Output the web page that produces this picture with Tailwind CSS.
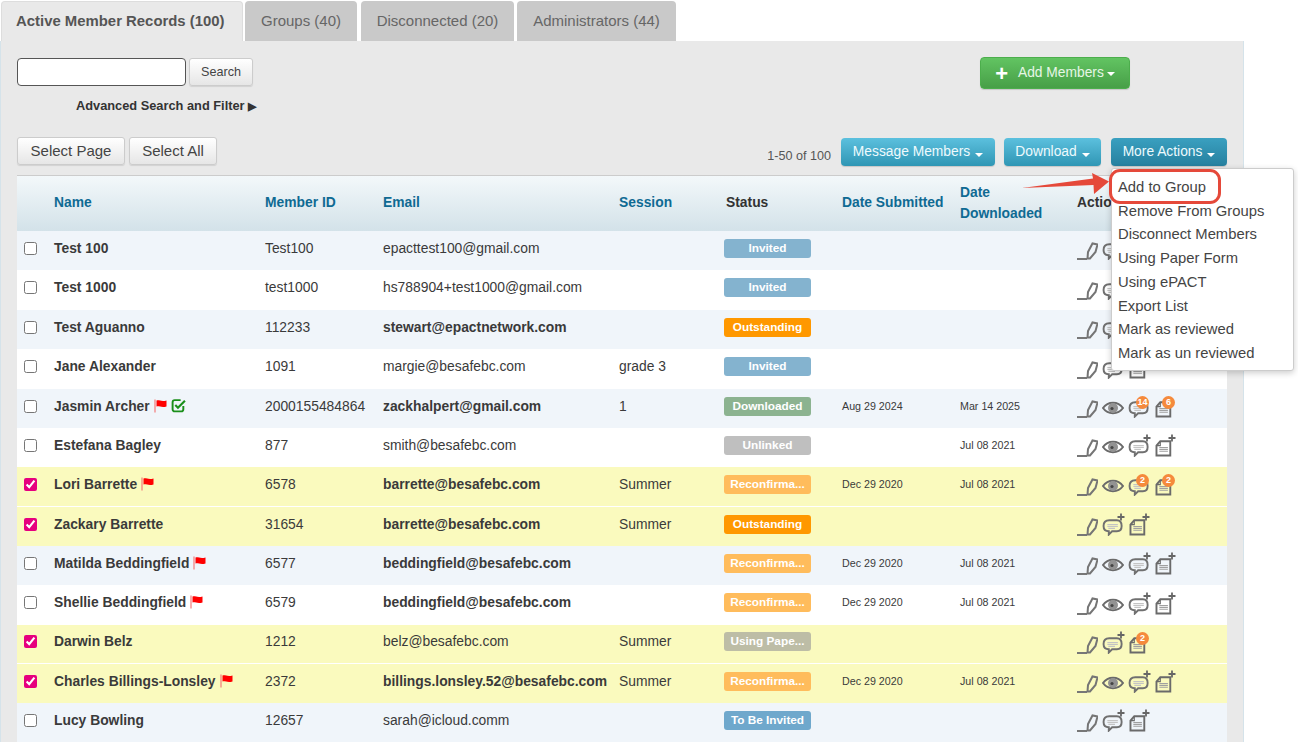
<!DOCTYPE html>
<html lang="en">
<head>
<meta charset="utf-8">
<title>Members</title>
<script src="https://cdn.jsdelivr.net/npm/@tailwindcss/browser@4"></script>
</head>
<body class="bg-white h-[742px] w-[1298px] overflow-hidden font-['Liberation_Sans',Arial,sans-serif] text-[13.850px] text-[#3a3a3a]">
<svg class="hidden" xmlns="http://www.w3.org/2000/svg">
  <symbol id="pen" viewBox="0 0 21 18"><path d="M0 17H10" fill="none" stroke="#777" stroke-width="2"/><path d="M10.500 16.500L11 10L15.500 1.500L20.500 2.500L18.500 10L13 16.500Z" fill="none" stroke="#757575" stroke-width="2"/></symbol>
  <symbol id="eye" viewBox="0 0 22 16"><path d="M1 8C6 1 16 1 21 8C16 15 6 15 1 8Z" fill="none" stroke="#6a6a6a" stroke-width="2"/><circle cx="11" cy="8" r="5" fill="#929292"/><circle cx="10" cy="8.500" r="1.600" fill="#444"/></symbol>
  <symbol id="chat" viewBox="0 0 25 21"><path d="M7 4.500H15C18 4.500 20 6.800 20 10.500C20 14 18 16 15 16H10L6.500 19.500L6.500 16C3 16 1 14 1 10.500C1 6.800 3 4.500 7 4.500Z" fill="none" stroke="#707070" stroke-width="2"/><path d="M5 9H16M5 11H16M6 13H13" stroke="#c4c4c4" stroke-width="1.200"/></symbol>
  <symbol id="doc" viewBox="0 0 22 21"><path d="M5 4.500H15.500V19.500H1V9Z" fill="none" stroke="#6a6a6a" stroke-width="2"/><path d="M5 5V9H1" fill="none" stroke="#6a6a6a" stroke-width="1.200"/><path d="M4 11H13M4 13H13M4 15H13" stroke="#a0a0a0" stroke-width="1.100"/></symbol>
  <symbol id="plus" viewBox="0 0 8 8"><path d="M4 0.500V7.500M0.500 4H7.500" stroke="#666" stroke-width="1.800"/></symbol>
  <symbol id="flag" viewBox="0 0 13 14"><path d="M1 0.500V13.500" stroke="#f47a7a" stroke-width="1.200"/><path d="M2.500 1.500C5 0.500 7 3 12.500 1.500V7.500C7 9 5 6.500 2.500 7.500Z" fill="#f00"/></symbol>
  <symbol id="ok" viewBox="0 0 14 14"><path d="M11.500 7.500V10.500C11.500 11.700 10.700 12.500 9.500 12.500H3.500C2.300 12.500 1.500 11.700 1.500 10.500V4C1.500 2.800 2.300 2 3.500 2H9" fill="none" stroke="#1a8f1a" stroke-width="1.800"/><path d="M4 6.500L6.500 9L13 2.500" fill="none" stroke="#1a8f1a" stroke-width="2"/></symbol>
</svg>

<!-- Tabs -->
<nav class="flex h-[41px] pl-px pt-px text-[15px]">
  <a class="w-[242px] bg-[#e9e9e9] rounded-t-[4px] border border-b-0 border-[#ddd] flex items-center pl-[14px] font-bold text-[14.900px] text-[#555]">Active Member Records (100)</a>
  <a class="w-[112px] ml-[2px] pt-[1px] bg-[#c9c9c9] rounded-t-[4px] flex items-center justify-center text-[#666]">Groups (40)</a>
  <a class="w-[153px] ml-[4px] pt-[1px] bg-[#c9c9c9] rounded-t-[4px] flex items-center justify-center text-[#666]">Disconnected (20)</a>
  <a class="w-[159px] ml-[3px] pt-[1px] bg-[#c9c9c9] rounded-t-[4px] flex items-center justify-center text-[#666]">Administrators (44)</a>
</nav>

<!-- Panel -->
<main class="relative w-[1244px] h-[701px] bg-[#e9e9e9] border-l border-r border-[#d5e3ea] pl-[16px] pr-[16px] pt-[16px]">
  <div class="flex items-start h-[32px]">
    <input type="text" aria-label="Search" class="mt-px w-[169px] h-[28px] bg-white border border-[#555] rounded-[4px]">
    <button class="mt-px ml-[3px] w-[64px] h-[28px] rounded-[3px] border border-[#ccc] bg-gradient-to-b from-white to-[#e6e6e6] text-[12.600px] text-[#444] shadow-[0_1px_1px_rgba(0,0,0,0.1)]">Search</button>
    <button class="ml-auto mr-[97px] w-[150px] h-[32px] pt-px rounded-[4px] border border-[#4cae4c] bg-gradient-to-b from-[#62c462] to-[#479f47] text-[#e6f6e6] text-[13.800px] flex items-center justify-center gap-[10px] shadow-[0_1px_1px_rgba(0,0,0,0.15)]">
      <span class="text-white text-[22px] leading-none font-bold">+</span>
      <span class="flex items-center gap-[3px]">Add Members <i class="w-0 h-0 border-x-[4px] border-x-transparent border-t-[4px] border-t-white"></i></span>
    </button>
  </div>
  <p class="mt-[9px] ml-[59px] h-[16px] leading-[16px] text-[12.800px] font-bold text-[#333]">Advanced Search and Filter <span class="text-[11px]">▶</span></p>
  <div class="mt-[23px] flex items-start h-[38px]">
    <button class="w-[108px] h-[28px] pt-px rounded-[3px] border border-[#ccc] bg-gradient-to-b from-white to-[#e6e6e6] text-[15px] text-[#444] shadow-[0_1px_1px_rgba(0,0,0,0.1)]">Select Page</button>
    <button class="ml-[4px] w-[88px] h-[28px] pt-px rounded-[3px] border border-[#ccc] bg-gradient-to-b from-white to-[#e6e6e6] text-[15px] text-[#444] shadow-[0_1px_1px_rgba(0,0,0,0.1)]">Select All</button>
    <span class="ml-auto mt-[10px] mr-[10px] text-[12.600px] text-[#555]">1-50 of 100</span>
    <button class="mt-px w-[154px] h-[28px] rounded-[4px] bg-gradient-to-b from-[#5bc0de] to-[#2f96b4] text-[#eefafd] text-[13.800px] flex items-center justify-center gap-[5px] shadow-[0_1px_1px_rgba(0,0,0,0.15)]">Message Members <i class="mt-[5px] w-0 h-0 border-x-[4px] border-x-transparent border-t-[4px] border-t-white"></i></button>
    <button class="mt-px ml-[9px] w-[97px] h-[28px] rounded-[4px] bg-gradient-to-b from-[#5bc0de] to-[#2f96b4] text-[#eefafd] text-[13.800px] flex items-center justify-center gap-[5px] shadow-[0_1px_1px_rgba(0,0,0,0.15)]">Download <i class="mt-[5px] w-0 h-0 border-x-[4px] border-x-transparent border-t-[4px] border-t-white"></i></button>
    <button class="mt-px ml-[10px] w-[116px] h-[28px] rounded-[4px] bg-gradient-to-b from-[#3aa0c0] to-[#26809f] text-[#eefafd] text-[13.800px] flex items-center justify-center gap-[5px] shadow-[0_1px_1px_rgba(0,0,0,0.15)]">More Actions <i class="mt-[5px] w-0 h-0 border-x-[4px] border-x-transparent border-t-[4px] border-t-white"></i></button>
  </div>

  <table class="w-[1210px] table-fixed border-collapse border-t border-[#ccc]">
    <colgroup><col class="w-[29px]"><col class="w-[211px]"><col class="w-[118px]"><col class="w-[236px]"><col class="w-[106px]"><col class="w-[117px]"><col class="w-[118px]"><col class="w-[117px]"><col class="w-[158px]"></colgroup>
    <thead>
      <tr class="h-[55px] bg-gradient-to-b from-[#f3f8fa] to-[#d3e2e9] text-left font-bold text-[#0f6a93]">
        <th></th>
        <th class="pl-[8px] pb-[2px]">Name</th>
        <th class="pl-[8px] pb-[2px]">Member ID</th>
        <th class="pl-[8px] pb-[2px]">Email</th>
        <th class="pl-[8px] pb-[2px]">Session</th>
        <th class="pl-[9px] pb-[2px] text-[#333]">Status</th>
        <th class="pl-[8px] pb-[2px]">Date Submitted</th>
        <th class="pl-[8px] pb-px leading-[21px] font-bold">Date<br>Downloaded</th>
        <th class="pl-[8px] pb-[2px] text-[#333]">Actions</th>
      </tr>
    </thead>
    <tbody class="[&_td:not(:last-child)]:pb-[4px]">
      <tr class="h-[39px] bg-[#f0f5fa]">
        <td class="pl-[7px]"><input type="checkbox" aria-label="Select" class="block size-[13px] accent-[#e6007e]"></td>
        <td class="pl-[8px] font-bold">Test 100</td><td class="pl-[8px]">Test100</td><td class="pl-[8px]">epacttest100@gmail.com</td><td class="pl-[8px]"></td>
        <td class="pl-[7px]"><span class="block w-[87px] h-[19px] leading-[19px] rounded-[3px] bg-[#84b3cf] text-white text-[11.800px] font-bold text-center">Invited</span></td>
        <td></td><td></td>
        <td class="pl-[8px]"><div class="flex items-end h-[20px]"><svg class="w-[21px] h-[18px]"><use href="#pen"/></svg><span class="relative ml-[4px] w-[25px] h-[20px]"><svg class="w-[25px] h-[20px]"><use href="#chat"/></svg></span></div></td>
      </tr>
      <tr class="h-[40px] bg-white">
        <td class="pl-[7px]"><input type="checkbox" aria-label="Select" class="block size-[13px] accent-[#e6007e]"></td>
        <td class="pl-[8px] font-bold">Test 1000</td><td class="pl-[8px]">test1000</td><td class="pl-[8px]">hs788904+test1000@gmail.com</td><td class="pl-[8px]"></td>
        <td class="pl-[7px]"><span class="block w-[87px] h-[19px] leading-[19px] rounded-[3px] bg-[#84b3cf] text-white text-[11.800px] font-bold text-center">Invited</span></td>
        <td></td><td></td>
        <td class="pl-[8px]"><div class="flex items-end h-[20px]"><svg class="w-[21px] h-[18px]"><use href="#pen"/></svg><span class="relative ml-[4px] w-[25px] h-[20px]"><svg class="w-[25px] h-[20px]"><use href="#chat"/></svg></span></div></td>
      </tr>
      <tr class="h-[39px] bg-[#f0f5fa]">
        <td class="pl-[7px]"><input type="checkbox" aria-label="Select" class="block size-[13px] accent-[#e6007e]"></td>
        <td class="pl-[8px] font-bold">Test Aguanno</td><td class="pl-[8px]">112233</td><td class="pl-[8px] font-bold">stewart@epactnetwork.com</td><td class="pl-[8px]"></td>
        <td class="pl-[7px]"><span class="block w-[87px] h-[19px] leading-[19px] rounded-[3px] bg-[#ff9800] text-white text-[11.800px] font-bold text-center">Outstanding</span></td>
        <td></td><td></td>
        <td class="pl-[8px]"><div class="flex items-end h-[20px]"><svg class="w-[21px] h-[18px]"><use href="#pen"/></svg><span class="relative ml-[4px] w-[25px] h-[20px]"><svg class="w-[25px] h-[20px]"><use href="#chat"/></svg></span></div></td>
      </tr>
      <tr class="h-[40px] bg-white">
        <td class="pl-[7px]"><input type="checkbox" aria-label="Select" class="block size-[13px] accent-[#e6007e]"></td>
        <td class="pl-[8px] font-bold">Jane Alexander</td><td class="pl-[8px]">1091</td><td class="pl-[8px]">margie@besafebc.com</td><td class="pl-[8px]">grade 3</td>
        <td class="pl-[7px]"><span class="block w-[87px] h-[19px] leading-[19px] rounded-[3px] bg-[#84b3cf] text-white text-[11.800px] font-bold text-center">Invited</span></td>
        <td></td><td></td>
        <td class="pl-[8px]"><div class="flex items-end h-[20px]"><svg class="w-[21px] h-[18px]"><use href="#pen"/></svg><span class="relative ml-[4px] w-[25px] h-[20px]"><svg class="w-[25px] h-[20px]"><use href="#chat"/></svg></span><span class="relative ml-[2px] w-[22px] h-[20px]"><svg class="w-[22px] h-[20px]"><use href="#doc"/></svg></span></div></td>
      </tr>
      <tr class="h-[39px] bg-[#f0f5fa]">
        <td class="pl-[7px]"><input type="checkbox" aria-label="Select" class="block size-[13px] accent-[#e6007e]"></td>
        <td class="pl-[8px] font-bold"><span class="flex items-center gap-[4px]">Jasmin Archer <svg class="w-[13px] h-[14px]"><use href="#flag"/></svg><svg class="w-[15px] h-[15px]"><use href="#ok"/></svg></span></td><td class="pl-[8px]">2000155484864</td><td class="pl-[8px] font-bold">zackhalpert@gmail.com</td><td class="pl-[8px]">1</td>
        <td class="pl-[7px]"><span class="block w-[87px] h-[19px] leading-[19px] rounded-[3px] bg-[#8cb390] text-white text-[11.800px] font-bold text-center">Downloaded</span></td>
        <td class="pl-[8px] text-[10.700px]">Aug 29 2024</td><td class="pl-[8px] text-[10.700px]">Mar 14 2025</td>
        <td class="pl-[8px]"><div class="flex items-end h-[20px]"><svg class="w-[21px] h-[18px]"><use href="#pen"/></svg><svg class="ml-[4px] mb-[2px] w-[22px] h-[16px]"><use href="#eye"/></svg><span class="relative ml-[4px] w-[25px] h-[20px]"><svg class="w-[25px] h-[20px]"><use href="#chat"/></svg><b class="absolute -top-[2px] left-[8px] size-[13px] rounded-full bg-[#f58a3c] text-white text-[9px] leading-[13px] text-center">14</b></span><span class="relative ml-[2px] w-[22px] h-[20px]"><svg class="w-[22px] h-[20px]"><use href="#doc"/></svg><b class="absolute -top-[2px] left-[7px] size-[13px] rounded-full bg-[#f58a3c] text-white text-[9px] leading-[13px] text-center">6</b></span></div></td>
      </tr>
      <tr class="h-[39px] bg-white">
        <td class="pl-[7px]"><input type="checkbox" aria-label="Select" class="block size-[13px] accent-[#e6007e]"></td>
        <td class="pl-[8px] font-bold">Estefana Bagley</td><td class="pl-[8px]">877</td><td class="pl-[8px]">smith@besafebc.com</td><td class="pl-[8px]"></td>
        <td class="pl-[7px]"><span class="block w-[87px] h-[19px] leading-[19px] rounded-[3px] bg-[#bfbfbf] text-white text-[11.800px] font-bold text-center">Unlinked</span></td>
        <td></td><td class="pl-[8px] text-[10.700px]">Jul 08 2021</td>
        <td class="pl-[8px]"><div class="flex items-end h-[20px]"><svg class="w-[21px] h-[18px]"><use href="#pen"/></svg><svg class="ml-[4px] mb-[2px] w-[22px] h-[16px]"><use href="#eye"/></svg><span class="relative ml-[4px] w-[25px] h-[20px]"><svg class="w-[25px] h-[20px]"><use href="#chat"/></svg><svg class="absolute -top-[3px] left-[15px] size-[8px]"><use href="#plus"/></svg></span><span class="relative ml-[2px] w-[22px] h-[20px]"><svg class="w-[22px] h-[20px]"><use href="#doc"/></svg><svg class="absolute -top-[3px] left-[13px] size-[8px]"><use href="#plus"/></svg></span></div></td>
      </tr>
      <tr class="h-[40px] bg-[#fafabe] border-b border-white">
        <td class="pl-[7px]"><input type="checkbox" checked aria-label="Select" class="block size-[13px] accent-[#e6007e]"></td>
        <td class="pl-[8px] font-bold"><span class="flex items-center gap-[4px]">Lori Barrette <svg class="w-[13px] h-[14px]"><use href="#flag"/></svg></span></td><td class="pl-[8px]">6578</td><td class="pl-[8px] font-bold">barrette@besafebc.com</td><td class="pl-[8px]">Summer</td>
        <td class="pl-[7px]"><span class="block w-[87px] h-[19px] leading-[19px] rounded-[3px] bg-[#ffbc5c] text-white text-[11.800px] font-bold text-center">Reconfirma...</span></td>
        <td class="pl-[8px] text-[10.700px]">Dec 29 2020</td><td class="pl-[8px] text-[10.700px]">Jul 08 2021</td>
        <td class="pl-[8px]"><div class="flex items-end h-[20px]"><svg class="w-[21px] h-[18px]"><use href="#pen"/></svg><svg class="ml-[4px] mb-[2px] w-[22px] h-[16px]"><use href="#eye"/></svg><span class="relative ml-[4px] w-[25px] h-[20px]"><svg class="w-[25px] h-[20px]"><use href="#chat"/></svg><b class="absolute -top-[2px] left-[8px] size-[13px] rounded-full bg-[#f58a3c] text-white text-[9px] leading-[13px] text-center">2</b></span><span class="relative ml-[2px] w-[22px] h-[20px]"><svg class="w-[22px] h-[20px]"><use href="#doc"/></svg><b class="absolute -top-[2px] left-[7px] size-[13px] rounded-full bg-[#f58a3c] text-white text-[9px] leading-[13px] text-center">2</b></span></div></td>
      </tr>
      <tr class="h-[39px] bg-[#fafabe]">
        <td class="pl-[7px]"><input type="checkbox" checked aria-label="Select" class="block size-[13px] accent-[#e6007e]"></td>
        <td class="pl-[8px] font-bold">Zackary Barrette</td><td class="pl-[8px]">31654</td><td class="pl-[8px] font-bold">barrette@besafebc.com</td><td class="pl-[8px]">Summer</td>
        <td class="pl-[7px]"><span class="block w-[87px] h-[19px] leading-[19px] rounded-[3px] bg-[#ff9800] text-white text-[11.800px] font-bold text-center">Outstanding</span></td>
        <td></td><td></td>
        <td class="pl-[8px]"><div class="flex items-end h-[20px]"><svg class="w-[21px] h-[18px]"><use href="#pen"/></svg><span class="relative ml-[4px] w-[25px] h-[20px]"><svg class="w-[25px] h-[20px]"><use href="#chat"/></svg><svg class="absolute -top-[3px] left-[15px] size-[8px]"><use href="#plus"/></svg></span><span class="relative ml-[2px] w-[22px] h-[20px]"><svg class="w-[22px] h-[20px]"><use href="#doc"/></svg><svg class="absolute -top-[3px] left-[13px] size-[8px]"><use href="#plus"/></svg></span></div></td>
      </tr>
      <tr class="h-[39px] bg-[#f0f5fa]">
        <td class="pl-[7px]"><input type="checkbox" aria-label="Select" class="block size-[13px] accent-[#e6007e]"></td>
        <td class="pl-[8px] font-bold"><span class="flex items-center gap-[4px]">Matilda Beddingfield <svg class="w-[13px] h-[14px]"><use href="#flag"/></svg></span></td><td class="pl-[8px]">6577</td><td class="pl-[8px] font-bold">beddingfield@besafebc.com</td><td class="pl-[8px]"></td>
        <td class="pl-[7px]"><span class="block w-[87px] h-[19px] leading-[19px] rounded-[3px] bg-[#ffbc5c] text-white text-[11.800px] font-bold text-center">Reconfirma...</span></td>
        <td class="pl-[8px] text-[10.700px]">Dec 29 2020</td><td class="pl-[8px] text-[10.700px]">Jul 08 2021</td>
        <td class="pl-[8px]"><div class="flex items-end h-[20px]"><svg class="w-[21px] h-[18px]"><use href="#pen"/></svg><svg class="ml-[4px] mb-[2px] w-[22px] h-[16px]"><use href="#eye"/></svg><span class="relative ml-[4px] w-[25px] h-[20px]"><svg class="w-[25px] h-[20px]"><use href="#chat"/></svg><svg class="absolute -top-[3px] left-[15px] size-[8px]"><use href="#plus"/></svg></span><span class="relative ml-[2px] w-[22px] h-[20px]"><svg class="w-[22px] h-[20px]"><use href="#doc"/></svg><svg class="absolute -top-[3px] left-[13px] size-[8px]"><use href="#plus"/></svg></span></div></td>
      </tr>
      <tr class="h-[40px] bg-white">
        <td class="pl-[7px]"><input type="checkbox" aria-label="Select" class="block size-[13px] accent-[#e6007e]"></td>
        <td class="pl-[8px] font-bold"><span class="flex items-center gap-[4px]">Shellie Beddingfield <svg class="w-[13px] h-[14px]"><use href="#flag"/></svg></span></td><td class="pl-[8px]">6579</td><td class="pl-[8px] font-bold">beddingfield@besafebc.com</td><td class="pl-[8px]"></td>
        <td class="pl-[7px]"><span class="block w-[87px] h-[19px] leading-[19px] rounded-[3px] bg-[#ffbc5c] text-white text-[11.800px] font-bold text-center">Reconfirma...</span></td>
        <td class="pl-[8px] text-[10.700px]">Dec 29 2020</td><td class="pl-[8px] text-[10.700px]">Jul 08 2021</td>
        <td class="pl-[8px]"><div class="flex items-end h-[20px]"><svg class="w-[21px] h-[18px]"><use href="#pen"/></svg><svg class="ml-[4px] mb-[2px] w-[22px] h-[16px]"><use href="#eye"/></svg><span class="relative ml-[4px] w-[25px] h-[20px]"><svg class="w-[25px] h-[20px]"><use href="#chat"/></svg><svg class="absolute -top-[3px] left-[15px] size-[8px]"><use href="#plus"/></svg></span><span class="relative ml-[2px] w-[22px] h-[20px]"><svg class="w-[22px] h-[20px]"><use href="#doc"/></svg><svg class="absolute -top-[3px] left-[13px] size-[8px]"><use href="#plus"/></svg></span></div></td>
      </tr>
      <tr class="h-[39px] bg-[#fafabe] border-b border-white">
        <td class="pl-[7px]"><input type="checkbox" checked aria-label="Select" class="block size-[13px] accent-[#e6007e]"></td>
        <td class="pl-[8px] font-bold">Darwin Belz</td><td class="pl-[8px]">1212</td><td class="pl-[8px]">belz@besafebc.com</td><td class="pl-[8px]">Summer</td>
        <td class="pl-[7px]"><span class="block w-[87px] h-[19px] leading-[19px] rounded-[3px] bg-[#bdbda6] text-white text-[11.800px] font-bold text-center">Using Pape...</span></td>
        <td></td><td></td>
        <td class="pl-[8px]"><div class="flex items-end h-[20px]"><svg class="w-[21px] h-[18px]"><use href="#pen"/></svg><span class="relative ml-[4px] w-[25px] h-[20px]"><svg class="w-[25px] h-[20px]"><use href="#chat"/></svg><svg class="absolute -top-[3px] left-[15px] size-[8px]"><use href="#plus"/></svg></span><span class="relative ml-[2px] w-[22px] h-[20px]"><svg class="w-[22px] h-[20px]"><use href="#doc"/></svg><b class="absolute -top-[2px] left-[7px] size-[13px] rounded-full bg-[#f58a3c] text-white text-[9px] leading-[13px] text-center">2</b></span></div></td>
      </tr>
      <tr class="h-[39px] bg-[#fafabe]">
        <td class="pl-[7px]"><input type="checkbox" checked aria-label="Select" class="block size-[13px] accent-[#e6007e]"></td>
        <td class="pl-[8px] font-bold"><span class="flex items-center gap-[4px]">Charles Billings-Lonsley <svg class="w-[13px] h-[14px]"><use href="#flag"/></svg></span></td><td class="pl-[8px]">2372</td><td class="pl-[8px] font-bold">billings.lonsley.52@besafebc.com</td><td class="pl-[8px]">Summer</td>
        <td class="pl-[7px]"><span class="block w-[87px] h-[19px] leading-[19px] rounded-[3px] bg-[#ffbc5c] text-white text-[11.800px] font-bold text-center">Reconfirma...</span></td>
        <td class="pl-[8px] text-[10.700px]">Dec 29 2020</td><td class="pl-[8px] text-[10.700px]">Jul 08 2021</td>
        <td class="pl-[8px]"><div class="flex items-end h-[20px]"><svg class="w-[21px] h-[18px]"><use href="#pen"/></svg><svg class="ml-[4px] mb-[2px] w-[22px] h-[16px]"><use href="#eye"/></svg><span class="relative ml-[4px] w-[25px] h-[20px]"><svg class="w-[25px] h-[20px]"><use href="#chat"/></svg><svg class="absolute -top-[3px] left-[15px] size-[8px]"><use href="#plus"/></svg></span><span class="relative ml-[2px] w-[22px] h-[20px]"><svg class="w-[22px] h-[20px]"><use href="#doc"/></svg><svg class="absolute -top-[3px] left-[13px] size-[8px]"><use href="#plus"/></svg></span></div></td>
      </tr>
      <tr class="h-[39px] bg-[#f0f5fa]">
        <td class="pl-[7px]"><input type="checkbox" aria-label="Select" class="block size-[13px] accent-[#e6007e]"></td>
        <td class="pl-[8px] font-bold">Lucy Bowling</td><td class="pl-[8px]">12657</td><td class="pl-[8px]">sarah@icloud.comm</td><td class="pl-[8px]"></td>
        <td class="pl-[7px]"><span class="block w-[87px] h-[19px] leading-[19px] rounded-[3px] bg-[#6fa8cc] text-white text-[11.800px] font-bold text-center">To Be Invited</span></td>
        <td></td><td></td>
        <td class="pl-[8px]"><div class="flex items-end h-[20px]"><svg class="w-[21px] h-[18px]"><use href="#pen"/></svg><span class="relative ml-[4px] w-[25px] h-[20px]"><svg class="w-[25px] h-[20px]"><use href="#chat"/></svg><svg class="absolute -top-[3px] left-[15px] size-[8px]"><use href="#plus"/></svg></span><span class="relative ml-[2px] w-[22px] h-[20px]"><svg class="w-[22px] h-[20px]"><use href="#doc"/></svg><svg class="absolute -top-[3px] left-[13px] size-[8px]"><use href="#plus"/></svg></span></div></td>
      </tr>
    </tbody>
  </table>

  <!-- Dropdown menu -->
  <ul class="absolute left-[1110px] top-[127px] w-[183px] h-[203px] bg-white border border-[#ccc] rounded-[3px] shadow-[0_2px_6px_rgba(0,0,0,0.2)] pt-[7px] pl-[6px] text-[14.800px] leading-[23.700px] text-[#444]">
    <li>Add to Group</li>
    <li>Remove From Groups</li>
    <li>Disconnect Members</li>
    <li>Using Paper Form</li>
    <li>Using ePACT</li>
    <li>Export List</li>
    <li>Mark as reviewed</li>
    <li>Mark as un reviewed</li>
  </ul>
  <!-- Annotation -->
  <span class="absolute left-[1108px] top-[128px] w-[112px] h-[35px] border-[3px] border-[#e5493a] rounded-[11px]"></span>
  <svg class="absolute left-[1021px] top-[130px] w-[90px] h-[25px]" viewBox="0 0 90 25"><path d="M0 17L71 7.500L70 2L87 10.500L72 23L71.500 14Z" fill="#e5493a"/></svg>
</main>
</body>
</html>
